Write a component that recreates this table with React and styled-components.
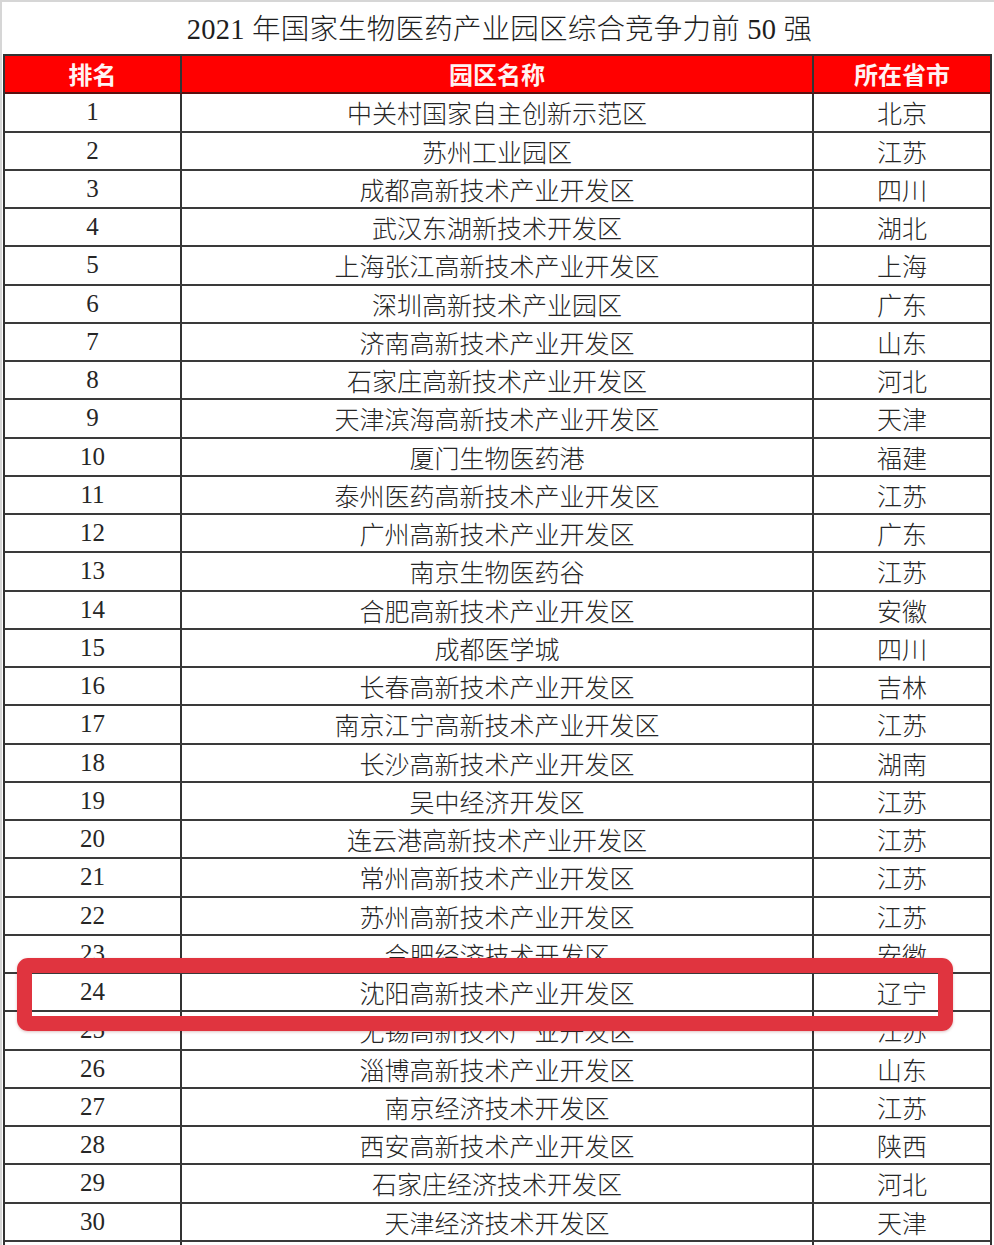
import React from 'react'
import styled, { createGlobalStyle } from 'styled-components'

const GlobalStyle = createGlobalStyle`
  html, body {
    margin: 0;
    padding: 0;
    background: #ffffff;
  }
  body {
    font-family: "Liberation Serif", "Noto Sans CJK SC", serif;
    color: #222222;
  }
`

const parks = [
  ['中关村国家自主创新示范区', '北京'],
  ['苏州工业园区', '江苏'],
  ['成都高新技术产业开发区', '四川'],
  ['武汉东湖新技术开发区', '湖北'],
  ['上海张江高新技术产业开发区', '上海'],
  ['深圳高新技术产业园区', '广东'],
  ['济南高新技术产业开发区', '山东'],
  ['石家庄高新技术产业开发区', '河北'],
  ['天津滨海高新技术产业开发区', '天津'],
  ['厦门生物医药港', '福建'],
  ['泰州医药高新技术产业开发区', '江苏'],
  ['广州高新技术产业开发区', '广东'],
  ['南京生物医药谷', '江苏'],
  ['合肥高新技术产业开发区', '安徽'],
  ['成都医学城', '四川'],
  ['长春高新技术产业开发区', '吉林'],
  ['南京江宁高新技术产业开发区', '江苏'],
  ['长沙高新技术产业开发区', '湖南'],
  ['吴中经济开发区', '江苏'],
  ['连云港高新技术产业开发区', '江苏'],
  ['常州高新技术产业开发区', '江苏'],
  ['苏州高新技术产业开发区', '江苏'],
  ['合肥经济技术开发区', '安徽'],
  ['沈阳高新技术产业开发区', '辽宁'],
  ['无锡高新技术产业开发区', '江苏'],
  ['淄博高新技术产业开发区', '山东'],
  ['南京经济技术开发区', '江苏'],
  ['西安高新技术产业开发区', '陕西'],
  ['石家庄经济技术开发区', '河北'],
  ['天津经济技术开发区', '天津'],
]

function App() {
  return (
    <Page>
      <GlobalStyle />
      <Title>2021 年国家生物医药产业园区综合竞争力前 50 强</Title>
      <Table>
        <HeadRow>
          <HeadCell>排名</HeadCell>
          <HeadCell>园区名称</HeadCell>
          <HeadCell>所在省市</HeadCell>
        </HeadRow>
        {parks.map(([name, place], i) => (
          <Row key={name}>
            <Cell>{i + 1}</Cell>
            <Cell>{name}</Cell>
            <Cell>{place}</Cell>
          </Row>
        ))}
        <Row>
          <Cell />
          <Cell />
          <Cell />
        </Row>
      </Table>
      <Highlight />
    </Page>
  )
}

export default App

const Page = styled.div`
  position: relative;
  width: 994px;
  height: 1245px;
  overflow: hidden;
  box-sizing: border-box;
  padding-left: 3px;
  border-top: 2px solid #d6d6d6;
  border-left: 2px solid #d6d6d6;
`

const Title = styled.div`
  height: 52px;
  display: flex;
  align-items: center;
  justify-content: center;
  padding-bottom: 4px;
  box-sizing: border-box;
  font-size: 28.5px;
  font-weight: 300;
  color: #1e1e1e;
  letter-spacing: 0.2px;
`

const Table = styled.div`
  width: 989px;
  margin-left: -2px;
  border: 2px solid #333333;
  border-bottom: none;
  box-sizing: border-box;
`

const Row = styled.div`
  display: grid;
  grid-template-columns: 177px 632px 1fr;
  height: 38.26px;
  box-sizing: border-box;
  border-bottom: 2px solid #3a3a3a;
`

const HeadRow = styled(Row)`
  background: #ff0000;
  border-bottom-color: #5a1010;
`

const Cell = styled.div`
  display: flex;
  align-items: center;
  justify-content: center;
  padding-bottom: 1px;
  box-sizing: border-box;
  font-size: 25px;
  font-weight: 300;
  color: #262626;
  border-right: 2px solid #333333;

  &:last-child {
    border-right: none;
  }
`

const HeadCell = styled(Cell)`
  padding-bottom: 2px;
  color: #fff3f3;
  font-family: "Noto Sans CJK SC", sans-serif;
  font-weight: 700;
  font-size: 24px;
`

const Highlight = styled.div`
  position: absolute;
  left: 15px;
  top: 956px;
  width: 936px;
  height: 73px;
  box-sizing: border-box;
  border: 15px solid #e0343f;
  border-radius: 11px;
  box-shadow: 0 1px 3px rgba(120, 0, 0, 0.25);
`
